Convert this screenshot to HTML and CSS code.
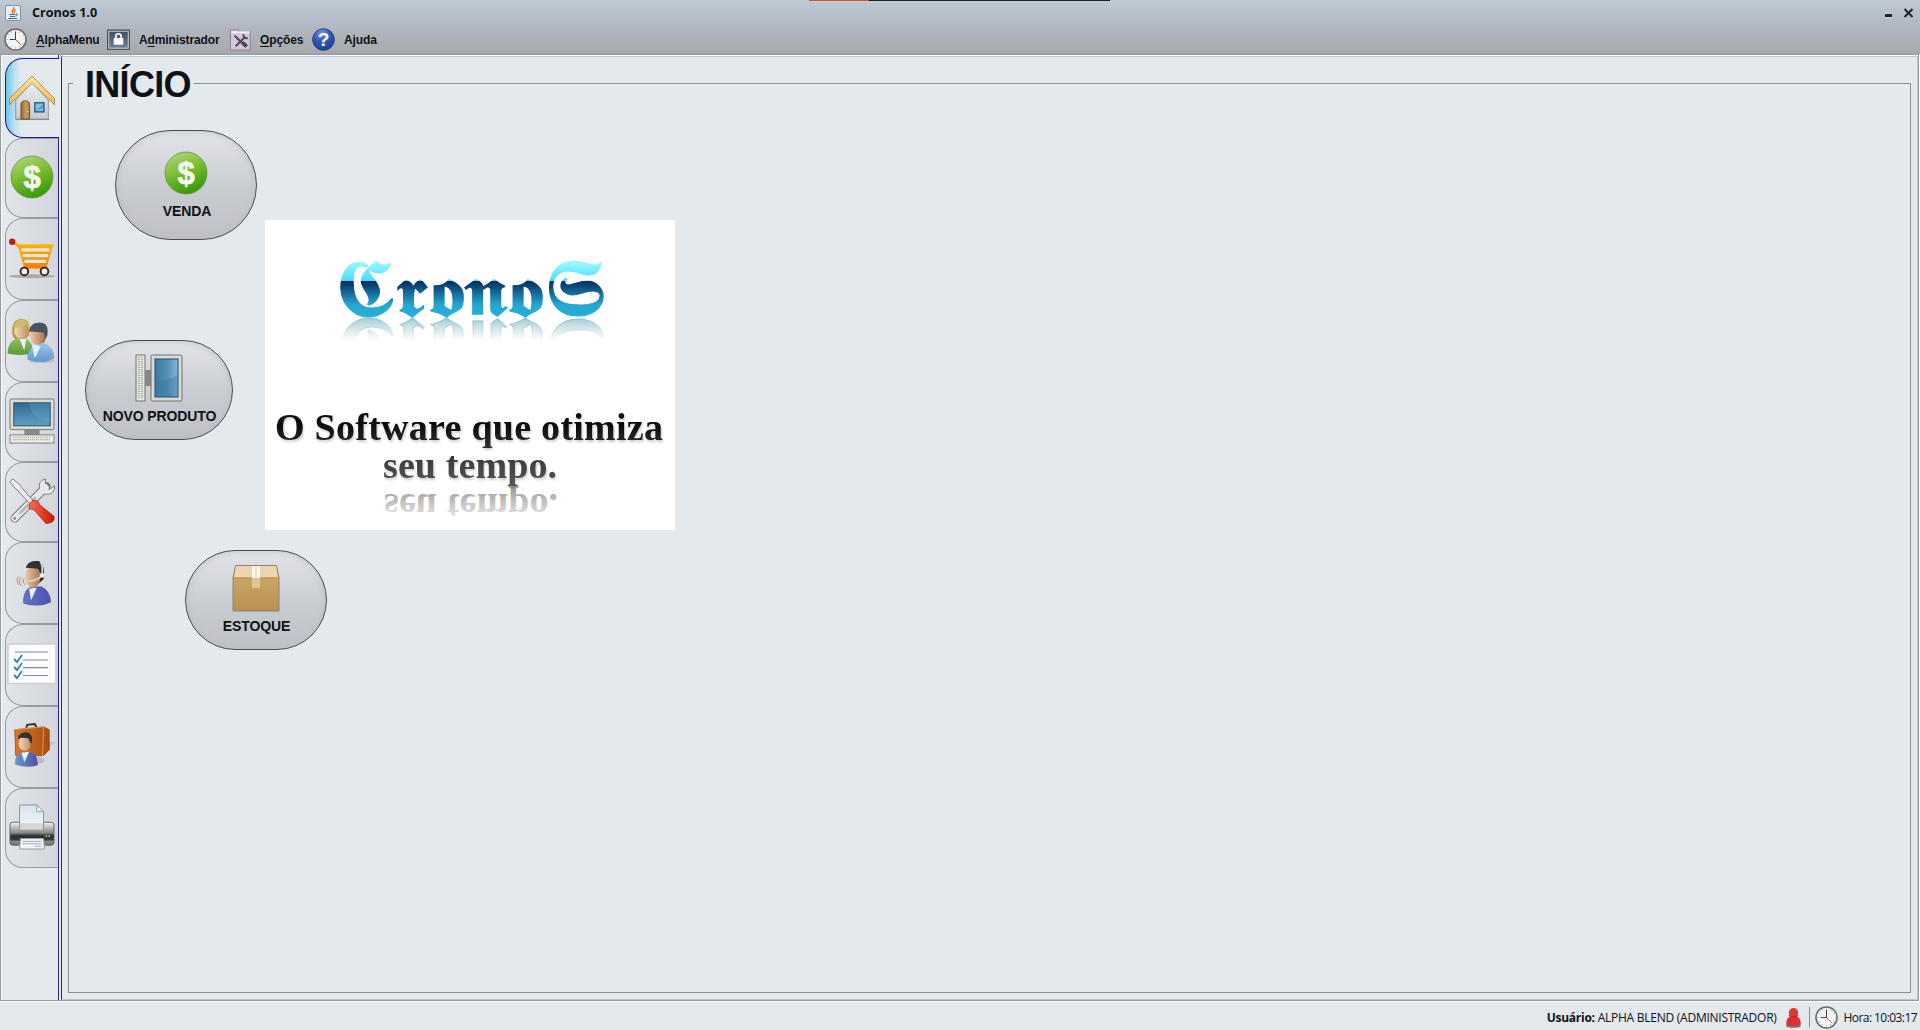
FILE: index.html
```html
<!DOCTYPE html>
<html lang="pt-BR">
<head>
<meta charset="utf-8">
<title>Cronos 1.0</title>
<link rel="stylesheet" href="styles.css">
</head>
<body>
<svg class="defs" width="0" height="0" aria-hidden="true">
  <defs>
    <linearGradient id="green" x1="0" y1="0" x2=".4" y2="1"><stop offset="0" stop-color="#b9d98a"/><stop offset=".5" stop-color="#7fbf35"/><stop offset="1" stop-color="#3c9d0c"/></linearGradient>
    <linearGradient id="wood" x1="0" y1="0" x2="0" y2="1"><stop offset="0" stop-color="#ffe4a6"/><stop offset="1" stop-color="#eebb5c"/></linearGradient>
    <linearGradient id="door" x1="0" x2="1"><stop offset="0" stop-color="#8f6a38"/><stop offset=".6" stop-color="#c89d5f"/><stop offset="1" stop-color="#a27b45"/></linearGradient>
    <linearGradient id="cartg" x1="0" y1="0" x2="0" y2="1"><stop offset="0" stop-color="#ffb30f"/><stop offset="1" stop-color="#ee7d1c"/></linearGradient>
    <linearGradient id="wall" x1="0" y1="0" x2="0" y2="1"><stop offset="0" stop-color="#e9ecf0"/><stop offset="1" stop-color="#c8ccd1"/></linearGradient>
    <linearGradient id="screen" x1="0" y1="0" x2="0" y2="1"><stop offset="0" stop-color="#2f688f"/><stop offset="1" stop-color="#5f9fc4"/></linearGradient>
    <linearGradient id="screenv" x1="0" x2="1"><stop offset="0" stop-color="#3d7ba3"/><stop offset=".55" stop-color="#5590b5"/><stop offset="1" stop-color="#86b6d6"/></linearGradient>
    <linearGradient id="skin" x1="0" x2="1"><stop offset="0" stop-color="#efc9a2"/><stop offset="1" stop-color="#a8714d"/></linearGradient>
    <linearGradient id="skinl" x1="0" x2="1"><stop offset="0" stop-color="#f5d9b8"/><stop offset="1" stop-color="#bf8d66"/></linearGradient>
    <linearGradient id="shirtg" x1="0" y1="0" x2="0" y2="1"><stop offset="0" stop-color="#8fbf62"/><stop offset="1" stop-color="#5d9a36"/></linearGradient>
    <linearGradient id="shirtb" x1="0" y1="0" x2="0" y2="1"><stop offset="0" stop-color="#9cc5ee"/><stop offset="1" stop-color="#5f95cf"/></linearGradient>
    <linearGradient id="suit" x1="0" x2="1"><stop offset="0" stop-color="#6573c5"/><stop offset="1" stop-color="#4852b4"/></linearGradient>
    <linearGradient id="suit2" x1="0" x2="1"><stop offset="0" stop-color="#6b9ccb"/><stop offset="1" stop-color="#504fa8"/></linearGradient>
    <linearGradient id="case" x1="0" x2="1"><stop offset="0" stop-color="#d9792e"/><stop offset="1" stop-color="#a94c12"/></linearGradient>
    <linearGradient id="printer" x1="0" y1="0" x2="0" y2="1"><stop offset="0" stop-color="#f4f4f4"/><stop offset=".45" stop-color="#8a8a8a"/><stop offset=".6" stop-color="#2c2c2c"/><stop offset=".78" stop-color="#3b3b3b"/><stop offset=".82" stop-color="#8f8f8f"/><stop offset="1" stop-color="#6b6b6b"/></linearGradient>
    <linearGradient id="paper" x1="0" y1="0" x2="0" y2="1"><stop offset="0" stop-color="#d4e4ee"/><stop offset="1" stop-color="#f5f8fa"/></linearGradient>
    <linearGradient id="box" x1="0" y1="0" x2="0" y2="1"><stop offset="0" stop-color="#d2ad72"/><stop offset="1" stop-color="#b98f4f"/></linearGradient>
    <linearGradient id="navy" x1="0" y1="0" x2="0" y2="1"><stop offset="0" stop-color="#3d5166"/><stop offset="1" stop-color="#6e8290"/></linearGradient>
    <radialGradient id="help" cx=".4" cy=".2" r=".9"><stop offset="0" stop-color="#6a90d8"/><stop offset=".5" stop-color="#2d57ae"/><stop offset="1" stop-color="#1c3e94"/></radialGradient>
    <linearGradient id="red" x1="0" x2="1"><stop offset="0" stop-color="#ff6a50"/><stop offset="1" stop-color="#cc1605"/></linearGradient>
    <symbol id="clock" viewBox="0 0 24 24">
      <circle cx="12" cy="12" r="11" fill="#f3f3f3" stroke="#6a6a6b" stroke-width="1.6"/>
      <circle cx="12" cy="12" r="8.800" fill="none" stroke="#999" stroke-width="1.4" stroke-dasharray=".8 3.807" stroke-dashoffset=".4"/>
      <path d="M12 4v8H6" fill="none" stroke="#444" stroke-width="1.100"/><path d="M12 12l6 6" stroke="#d3543c"/>
    </symbol>
    <symbol id="money" viewBox="0 0 44 44">
      <circle cx="22" cy="22" r="21" fill="url(#green)" stroke="#6d9150" stroke-width=".8"/>
      <text x="22" y="32.500" text-anchor="middle" class="dollar">$</text>
    </symbol>
  </defs>
</svg>

<header class="window-head">
  <div class="desktop-strip"><i class="strip-orange"></i><i class="strip-black"></i></div>
  <div class="titlebar">
    <svg class="java" viewBox="0 0 16 16"><rect x=".5" y=".5" width="15" height="15" rx="1.5" fill="#e9eef0" stroke="#7d94a2"/><path d="M8.500 2C10 4 5.500 5 8 8.500M10.500 4c-2.500 2 0 2-1.500 4" fill="none" stroke="#e8752a" stroke-width="1.4"/><path d="M4.500 9.500h6M5 11.500h5M3.500 13.500h8.500M11 9c2.500-.5 2 1.500-.5 2" fill="none" stroke="#446a85"/></svg>
    <span class="title">Cronos 1.0</span>
    <svg class="controls" viewBox="0 0 30 12"><path d="M1 8.500h7" stroke="#fff8" stroke-width="4"/><path d="M1 8.500h7" stroke="#202428" stroke-width="3"/><path d="M20.500 2l8 8M28.500 2l-8 8" stroke="#202428" stroke-width="2"/></svg>
  </div>
  <nav class="menubar">
    <a class="menu m1"><svg class="mi" viewBox="0 0 24 24"><use href="#clock"/></svg><span><u>A</u>lphaMenu</span></a>
    <a class="menu m2"><svg class="mi" viewBox="0 0 24 24"><rect x=".7" y="2.200" width="22.600" height="20" fill="#d9dfe3" stroke="#444c55" stroke-width="1.300"/><rect x="2.300" y="3.800" width="19.400" height="16.800" fill="url(#navy)"/><rect x="7" y="10.500" width="10" height="7" rx="1" fill="#fff"/><path d="M9.200 11V8.800a2.800 2.800 0 0 1 5.600 0V11" fill="none" stroke="#fff" stroke-width="1.700"/></svg><span>A<u>d</u>ministrador</span></a>
    <a class="menu m3"><svg class="mi" viewBox="0 0 24 24"><path d="M1.500 4V2h8.500v2h12v19H1.500z" fill="#d6c6da" stroke="#8d7c96"/><path d="M2.500 4.500h19" stroke="#f5eff7" stroke-width="2"/><path d="M6 8l11 11M17 9L7 19" stroke="#54465a" stroke-width="2.200"/><path d="M15 6.500c0 4 2 4.500 4.500 4" fill="none" stroke="#54465a" stroke-width="2"/><path d="M14 15l4.500 4.500" stroke="#54465a" stroke-width="4"/></svg><span><u>O</u>pções</span></a>
    <a class="menu m4"><svg class="mi" viewBox="0 0 24 24"><circle cx="12" cy="12" r="11.300" fill="url(#help)" stroke="#1f408f"/><text x="12" y="19" text-anchor="middle" class="question">?</text></svg><span>Ajuda</span></a>
  </nav>
</header>

<main class="work">
  <nav class="tabs">
    <div class="tab t1 active"><svg class="ic" viewBox="0 0 48 48"><path d="M7 26L24 8l17 18v20H7z" fill="url(#wall)" stroke="#8d9299"/><path d="M7 46.500h35" stroke="#85898e"/><path d="M.5 24.500L24 1l23.500 23.500V31L24 8.500.5 31z" fill="url(#wood)" stroke="#a17b37" stroke-width=".8"/><path d="M12.500 46V31q0-4 4.500-4t4.500 4v15z" fill="url(#door)" stroke="#704e20"/><rect x="27" y="29" width="9.500" height="9.500" fill="#7fc0e4" stroke="#1e4b77" stroke-width="1.300"/><path d="M28 37.500l7.500-7v4z" fill="#4f9fcf"/><circle cx="19.500" cy="38" r=".8" fill="#ffe7af"/></svg></div>
    <div class="tab t2"><svg class="ic dol" viewBox="0 0 44 44"><use href="#money"/></svg></div>
    <div class="tab t3"><svg class="ic" viewBox="0 0 48 48"><ellipse cx="24" cy="42" rx="24" ry="2" fill="#aaa"/><path d="M4 6l7 5 6 22h23" fill="none" stroke="#fba80d" stroke-width="3"/><path d="M10.500 8.500h36L39 33.500H17z" fill="url(#cartg)"/><path d="M14 14.500h27M15.500 20.500h24M17.500 26.500h20" stroke="#f1e5d5" stroke-width="3.500" stroke-linecap="round"/><circle cx="3.300" cy="6" r="3.300" fill="#b51f1d"/><circle cx="16" cy="37" r="4" fill="#f3f3f3" stroke="#302620" stroke-width="2"/><circle cx="37" cy="37" r="4" fill="#f3f3f3" stroke="#302620" stroke-width="2"/></svg></div>
    <div class="tab t4"><svg class="ic people" viewBox="-2 0 50 48"><path d="M4 19C2 8 5 1 13 1c7 0 10 5 8 17l-5 5H7z" fill="#b99b45"/><ellipse cx="13" cy="13" rx="7.500" ry="9" fill="url(#skinl)"/><path d="M5 10q8 1 13-4 2 2 2 7 3-10-6-11Q6 1 5 10z" fill="#d2bc6c"/><path d="M-1.500 37Q-1 23 10 21h7q8 3 8 16-14 3-26.500 0z" fill="url(#shirtg)"/><path d="M11 22l5 12 2-12z" fill="#e8eef2"/><ellipse cx="35" cy="45" rx="14" ry="2" fill="#c0c4ca"/><path d="M23 17q-1-12 9-12t8 13l-4 8z" fill="#444a50"/><ellipse cx="30" cy="18" rx="8" ry="10" fill="url(#skin)"/><path d="M21 13q2-9 12-8t5 15l-2-5-15-1z" fill="#4b5259"/><path d="M19.500 43q0-14 12-16h5q10 3 10.500 15-13 7-27.500 1z" fill="url(#shirtb)" stroke="#6a98c7" stroke-width=".5"/><path d="M24 29l3 13 6-12-4-2z" fill="#e4f0fa"/></svg></div>
    <div class="tab t5"><svg class="ic" viewBox="0 0 48 48"><rect x="16" y="32" width="16" height="7" fill="#888b86"/><rect x="1" y="1" width="46" height="32" rx="1.500" fill="#dcdcd4" stroke="#74746e"/><rect x="5" y="5" width="38" height="24" fill="url(#screen)" stroke="#1b5074"/><path d="M21 5h22v20q-18 0-22-20" fill="#74abc8" opacity=".3"/><rect x="1" y="38.500" width="46" height="8.500" fill="#ecece8" stroke="#7d7d78"/><path d="M4 41h23M4 43.500h23M28 41h16M28 43.500h16" stroke="#888" stroke-dasharray="1 1"/></svg></div>
    <div class="tab t6"><svg class="ic" viewBox="0 0 48 48"><path d="M6 42L39 9" stroke="#777" stroke-width="9" stroke-linecap="round"/><path d="M38 1q-8 2-6 10 0 6 8 6 7 0 8-9l-6 4-4-3z" fill="#eaeaea" stroke="#777"/><path d="M6 42L38 10" stroke="#e7e7e7" stroke-width="7" stroke-linecap="round"/><circle cx="6" cy="42" r="2.200" fill="#888" stroke="#fff"/><path d="M11 37l17-17" stroke="#b8b8b8" stroke-width="3"/><path d="M1 4l3-3 6 5 17 20-3 3L6 10z" fill="#efefef" stroke="#777"/><path d="M21 28l4-5 5 1 2 4 15 12q1 6-5 7-3 1-4 0L26 33l-5-1z" fill="url(#red)" stroke="#9d2a1d" stroke-width=".8"/></svg></div>
    <div class="tab t7"><svg class="ic" viewBox="0 0 48 48"><path d="M15 45q0-15 9-17h10q9 4 9.500 16-13 6-28.500 1z" fill="url(#suit)" stroke="#454da1" stroke-width=".5"/><path d="M21 30l2 12 6-13z" fill="#eef2f7"/><path d="M20 12q0-11 10-11 8 1 6 19l-8 7z" fill="#23282b"/><ellipse cx="25" cy="17.500" rx="8" ry="11.500" fill="url(#skin)"/><path d="M17 9q2-8 11-8 8 1 8 15l-5-7-13-1z" fill="#2c3235"/><path d="M33 2q3 6 1 14-3 5-14 6" fill="none" stroke="#d7d9dc" stroke-width="1.800"/><circle cx="34.500" cy="16" r="2.500" fill="#eee"/><path d="M16 19q-3 3 1 7M13 18q-4 4 0 9M10.500 17q-4 4-.5 9" fill="none" stroke="#c5844c"/></svg></div>
    <div class="tab t8"><svg class="ic list" viewBox="0 0 50 42"><rect x="1" y="1" width="48" height="39.500" fill="#fbfbfc" stroke="#c9ced7" stroke-width="1.500"/><path d="M8 9h33M16 17h25M16 24.700h25M16 32.500h25" stroke="#8a879c" stroke-width="1.200"/><path d="M7 16l3 3 5-7M7 24l3 3 5-7M7 32l3 3 5-7" fill="none" stroke="#2c83b9" stroke-width="1.800"/></svg></div>
    <div class="tab t9"><svg class="ic" viewBox="0 0 48 48"><path d="M31 35l17-15-7-1v-8z" fill="#b5b9bd" opacity=".7"/><path d="M18 5l1-3 8-1 2 4" fill="none" stroke="#333" stroke-width="2"/><path d="M6 7L36 4l6 3v21l-6 6H7z" fill="url(#case)" stroke="#85400f" stroke-width=".7"/><path d="M6 7L36 4l-1 30" fill="none" stroke="#e89a50"/><ellipse cx="28" cy="39" rx="9" ry="4" fill="#aab" opacity=".6"/><path d="M6 43q0-11 9-13h7q8 2 8 14-11 4-24-1z" fill="url(#suit2)"/><path d="M13 31l3 10 5-11z" fill="#edf4f8"/><path d="M10 16q0-6 9-6 7 2 4 13l-4 5z" fill="#2e3132"/><ellipse cx="16.500" cy="21" rx="6.500" ry="8" fill="url(#skinl)"/><path d="M9 15q3-6 10-5 7 2 4 12l-3-6z" fill="#303334"/></svg></div>
    <div class="tab t10"><svg class="ic" viewBox="0 0 48 48"><rect x="1" y="19" width="46" height="24" rx="3" fill="url(#printer)" stroke="#666"/><path d="M11 1h18l7 7v19H11z" fill="url(#paper)" stroke="#83929b"/><path d="M29 1v7h7z" fill="#f4f8fa" stroke="#8b9aa3"/><path d="M11.500 20h24v7h-24z" fill="#c9c9c9" opacity=".7"/><path d="M38 33.500h2M41 33.500h2" stroke="#b6ee2e" stroke-width="1.500"/><path d="M12 36h24l1 11H11z" fill="#f2f5f7" stroke="#8e9a9f"/><path d="M14 39h20M14 41.500h20M27 44h7" stroke="#9aacb7"/></svg></div>
  </nav>

  <section class="page">
    <fieldset class="panel">
      <legend>INÍCIO</legend>
      <div class="home">
        <div class="shortcuts">
          <button class="pill venda"><svg class="pi money" viewBox="0 0 44 44"><use href="#money"/></svg><span>VENDA</span></button>
          <button class="pill produto"><svg class="pi" viewBox="0 0 48 48"><rect x="1" y="1" width="9" height="46" fill="#e4e4df" stroke="#73736e"/><path d="M4 3v42M7 3v42" stroke="#777" stroke-dasharray="1 1"/><rect x="10" y="16" width="7" height="16" fill="#888b85"/><rect x="16" y="1" width="31" height="46" rx="1.500" fill="#d9d9d2" stroke="#73736e"/><rect x="20" y="5" width="23" height="38" fill="url(#screenv)" stroke="#1b5074"/><path d="M20 28q8 0 23-7v22H20z" fill="#2e6c96" opacity=".3"/></svg><span>NOVO PRODUTO</span></button>
          <button class="pill estoque"><svg class="pi" viewBox="0 0 48 48"><path d="M3.500 1.500h41L47 14v33H1V14z" fill="url(#box)" stroke="#8b8476"/><path d="M4 2h40l2 11.500H2z" fill="#ecd5b2"/><path d="M1 14h46" stroke="#b18a52"/><path d="M20 2h8v12h-8z" fill="#fdf8ef"/><path d="M24 2v12" stroke="#d9c7aa"/><path d="M20 14h8v10h-8z" fill="#dfc59b"/></svg><span>ESTOQUE</span></button>
        </div>
        <div class="splash">
          <svg class="brand" viewBox="0 0 410 310">
            <defs>
              <linearGradient id="logo" gradientUnits="userSpaceOnUse" x1="0" y1="39" x2="0" y2="98"><stop offset="0" stop-color="#aefcff"/><stop offset=".37" stop-color="#46dcff"/><stop offset=".37" stop-color="#042b5d"/><stop offset=".78" stop-color="#25a8d0"/><stop offset="1" stop-color="#27b0d8"/></linearGradient>
              <linearGradient id="logofade" gradientUnits="userSpaceOnUse" x1="0" y1="98" x2="0" y2="74"><stop offset="0" stop-color="#7fbccb" stop-opacity=".8"/><stop offset="1" stop-color="#b5ccd2" stop-opacity="0"/></linearGradient>
              <linearGradient id="slogan" gradientUnits="userSpaceOnUse" x1="0" y1="190" x2="0" y2="265"><stop offset=".2" stop-color="#0c0c0d"/><stop offset=".5" stop-color="#303032"/><stop offset="1" stop-color="#565658"/></linearGradient>
              <linearGradient id="slogfade" gradientUnits="userSpaceOnUse" x1="0" y1="265" x2="0" y2="230"><stop offset="0" stop-color="#666" stop-opacity=".7"/><stop offset="1" stop-color="#999" stop-opacity=".2"/></linearGradient>
            </defs>
            <text class="logo" x="69" y="96" textLength="271" lengthAdjust="spacingAndGlyphs" fill="url(#logo)" stroke="url(#logo)"><tspan class="cap">𝕮</tspan>𝖗𝖔𝖓𝖔<tspan class="cap">𝕾</tspan></text>
            <g transform="matrix(1 0 0 -1 0 195)"><text class="logo" x="69" y="96" textLength="271" lengthAdjust="spacingAndGlyphs" fill="url(#logofade)" stroke="url(#logofade)" aria-hidden="true"><tspan class="cap">𝕮</tspan>𝖗𝖔𝖓𝖔<tspan class="cap">𝕾</tspan></text></g>
            <text class="slogan" x="10" y="219.500" textLength="388" fill="url(#slogan)">O Software que otimiza</text>
            <text class="slogan" x="118" y="257.500" textLength="174" fill="url(#slogan)">seu tempo.</text>
            <g transform="matrix(1 0 0 -1 0 531)"><text class="slogan reflection" x="119" y="257" textLength="174" fill="url(#slogfade)" aria-hidden="true">seu tempo.</text></g>
          </svg>
        </div>
      </div>
    </fieldset>
  </section>
</main>

<footer class="status">
  <span class="user"><b>Usuário:</b> ALPHA BLEND (ADMINISTRADOR)</span>
  <svg class="pawn" viewBox="0 0 18 22"><ellipse cx="9" cy="20" rx="8" ry="1.800" fill="#777"/><path d="M1.500 19q-1-7 4-9h7q5 2 4 9-8 2-15 0z" fill="#df3030"/><circle cx="9" cy="6" r="5" fill="#e33535"/><path d="M4 9q5 3 10 0" fill="none" stroke="#a81c1c"/></svg>
  <i class="sep"></i>
  <svg class="mi" viewBox="0 0 24 24"><use href="#clock"/></svg>
  <span class="time">Hora: 10:03:17</span>
</footer>
</body>
</html>
```

FILE: styles.css
```css
* { box-sizing: border-box; }
body {
  margin: 0;
  width: 1920px;
  height: 1030px;
  overflow: hidden;
  display: flex;
  flex-direction: column;
  background: #e4e9ed;
  color: #0e1216;
  font-family: "Liberation Sans", Arial, sans-serif;
}
.defs { position: absolute; }
svg { display: block; flex: none; }

/* window head */
.window-head {
  height: 54px;
  flex: none;
  background: linear-gradient(#bfcad2, #b4bcc7 35%, #a9acaf 90%, #a5a8aa);
}
.desktop-strip { display: flex; height: 1px; padding-left: 809px; }
.strip-orange { width: 60px; background: #d15433; }
.strip-black { width: 241px; background: #242126; }
.titlebar { height: 23px; display: flex; align-items: center; padding: 0 6px 0 5px; gap: 11px; }
.java { width: 16px; height: 16px; }
.title { font: bold 12.6px/20px "Open Sans", "Noto Sans", sans-serif; flex: 1; }
.controls { width: 30px; height: 12px; }
.menubar { height: 30px; display: flex; align-items: center; padding-left: 4px; }
.menu { display: flex; align-items: center; font-size: 12px; font-weight: bold; height: 24px; letter-spacing: -.12px; }
.mi { width: 23px; height: 23px; }
.menu span { margin-left: 9px; padding-top: 1px; white-space: nowrap; }
.menu u { text-underline-offset: 2px; }
.m1 { width: 103px; }
.m2 { width: 122px; }
.m3 { width: 83px; }
.m3 span { margin-left: 8px; }
.question { font: bold 20px "Liberation Sans", sans-serif; fill: #fff; }

/* work area */
.work {
  flex: 1;
  min-height: 0;
  display: flex;
  margin-right: 1px;
  border: 1px solid #94999d;
  box-shadow: inset 1px 1px #fff, 1px 0 #fff;
}
.tabs { width: 58px; flex: none; padding: 3px 0 0 4px; display: flex; flex-direction: column; border-right: 1px solid #24248f; }
.tab {
  border: 1.500px solid #999ca2;
  border-right: 0;
  border-radius: 18px 0 0 18px;
  background: linear-gradient(90deg, #e1e4e9, #d2d5da);
  width: 53px;
  height: 82px;
  padding: 0 0 2px 3px;
  display: flex;
  align-items: center;
}
.active { width: 54px; border: 1px solid #1c1c93; border-right: 0; background: linear-gradient(90deg, #6fc5ea, #b9e1f2 16%, #e4e9ed 28%); }
.t1, .t2, .t5, .t6, .t10 { height: 80px; }
.t1, .t3, .t4, .t7 { padding-bottom: 0; }
.ic { width: 46px; height: 46px; }
.dol { width: 44px; height: 44px; margin-left: 1px; }
.dollar { font: bold 31px "Liberation Sans", sans-serif; fill: #f3f8ec; stroke: #f3f8ec; stroke-width: .7px; }
.people { width: 48px; margin-left: -2px; }
.list { width: 50px; height: 42px; margin-left: -2px; }

.page { flex: 1; display: flex; margin: 1px 0 0 2px; border: solid #bac6d2; border-width: 1px 1px 1px 0; border-left: 1px solid #24248f; padding: 5px 6px 6px; }
.panel { flex: 1; min-width: 0; margin: 0; padding: 0; border: 1px solid #8b8e92; }
.panel legend { margin-left: 4px; padding: 4px 3px 0 12px; font-size: 36px; line-height: 38px; font-weight: bold; letter-spacing: -.7px; }
.home { display: flex; padding-top: 26px; }
.shortcuts { width: 196px; display: flex; flex-direction: column; align-items: flex-start; flex: none; }
.pill {
  flex: none;
  border: 1px solid #4a4d51;
  border-radius: 50px;
  padding: 0;
  width: 142px;
  height: 100px;
  display: flex;
  flex-direction: column;
  align-items: center;
  background: linear-gradient(#e3e4e9, #d0d3d8 38%, #c8cbcf 55%, #bfc1c6);
  box-shadow: inset 0 0 7px #b9bdc3;
  color: #0e1216;
  font: bold 14px "Liberation Sans", sans-serif;
  letter-spacing: -.12px;
}
.pi { width: 48px; height: 48px; margin-top: 13px; }
.pill span { margin: 6px 0 0 1px; line-height: 16px; white-space: nowrap; }
.venda { height: 110px; border-radius: 55px; margin-left: 46px; }
.pi.money { width: 44px; height: 44px; margin-top: 20px; }
.venda span { margin: 8px 0 0 2px; }
.produto { width: 148px; margin: 100px 0 0 16px; }
.estoque { margin: 110px 0 0 116px; }
.splash { width: 410px; height: 310px; flex: none; margin-top: 90px; background: #fff; }
.brand { width: 410px; height: 310px; }
.logo { font: 70px "DejaVu Sans", serif; stroke-width: 1.4px; }
.logo .cap { font-size: 80px; stroke-width: .9px; }
.slogan { font: bold 38px "Liberation Serif", serif; filter: drop-shadow(1px 2px 1px #0003); }
.reflection { filter: none; }

/* status bar */
.status { height: 29px; flex: none; border-top: 1px solid #fff; display: flex; align-items: center; justify-content: flex-end; padding: 2px 3px 0 0; font: 12px "Open Sans", "Noto Sans", sans-serif; letter-spacing: -.25px; }
.user b { font-weight: bold; }
.pawn { width: 17px; height: 21px; margin-left: 8px; }
.sep { width: 1px; height: 20px; background: #8b8e92; margin: 0 5px 0 7px; }
.time { margin-left: 6px; letter-spacing: -.57px; }
```
